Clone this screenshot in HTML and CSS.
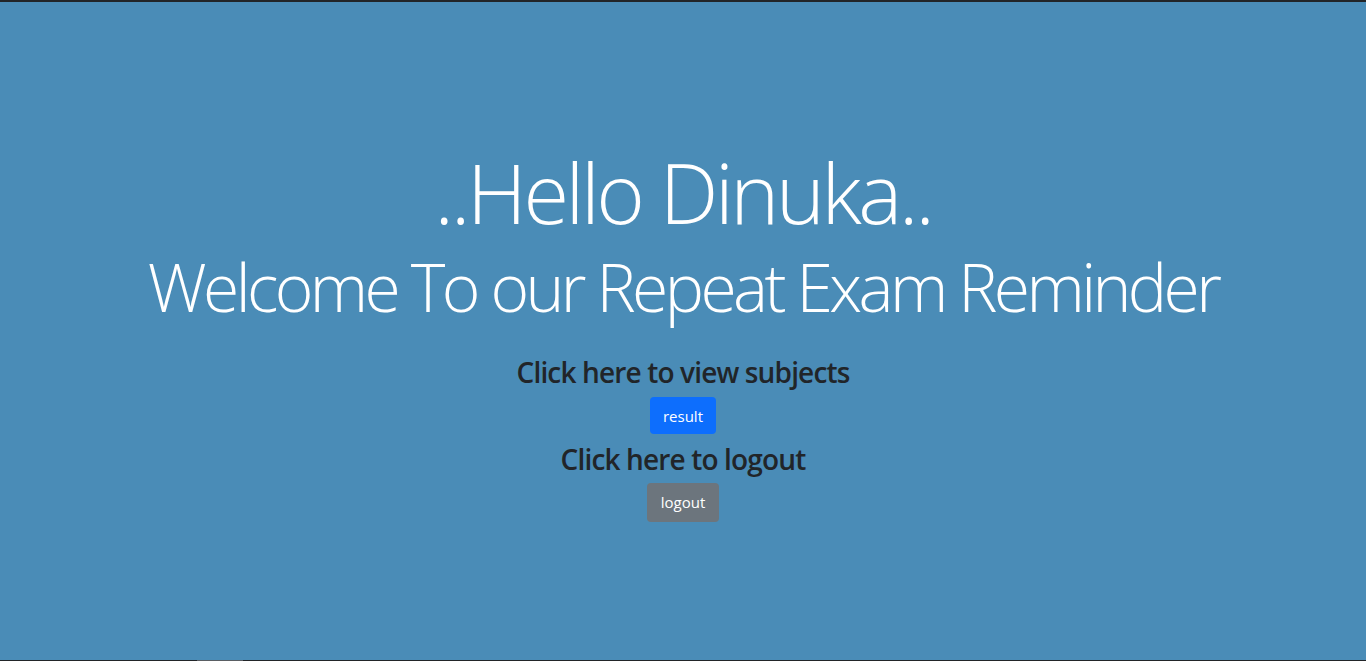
FILE: index.html
```html
<!DOCTYPE html>
<html lang="en">
<head>
<meta charset="utf-8">
<title>Repeat Exam Reminder</title>
<link rel="stylesheet" href="styles.css">
</head>
<body>
<main class="page">
  <section class="hero">
    <h1 class="hello">..Hello Dinuka..</h1>
    <h2 class="welcome">Welcome To our Repeat Exam Reminder</h2>
    <h3 class="label">Click here to view subjects</h3>
    <button class="btn btn-primary">result</button>
    <h3 class="label label-logout">Click here to logout</h3>
    <button class="btn btn-secondary">logout</button>
  </section>
</main>
<div class="scroll-thumb"></div>
</body>
</html>
```
FILE: styles.css
```css
html {
  background: #222528;
}
body {
  margin: 0;
  height: 661px;
  overflow: hidden;
  font-family: "Open Sans", "Liberation Sans", sans-serif;
}
.page {
  margin-top: 2px;
  height: 658px;
  background: #4a8cb7;
}
.hero {
  display: flex;
  flex-direction: column;
  align-items: center;
  padding-top: 140px;
}
.hello {
  margin: 0;
  font-size: 83px;
  line-height: 1.2;
  font-weight: 300;
  letter-spacing: -3.4px;
  color: #fff;
}
.welcome {
  margin: 5px 0 0;
  font-size: 66px;
  line-height: 1.2;
  font-weight: 300;
  letter-spacing: -3.6px;
  color: #fff;
}
.label {
  margin: 30px 0 8px;
  font-size: 28px;
  line-height: 1.2;
  font-weight: 600;
  letter-spacing: -0.85px;
  color: #212529;
}
.label-logout {
  margin: 9px 0 6px;
}
.btn {
  font-family: inherit;
  font-size: 15px;
  line-height: 24px;
  border: 1px solid transparent;
  border-radius: 4px;
  color: #fff;
}
.btn-primary {
  background: #0d6efd;
  padding: 6px 12px 5px;
}
.btn-secondary {
  background: #6c757d;
  padding: 6px 13px 7px;
}
.scroll-thumb {
  position: absolute;
  left: 197px;
  top: 660px;
  width: 46px;
  height: 1px;
  background: #5a5e63;
}
```
